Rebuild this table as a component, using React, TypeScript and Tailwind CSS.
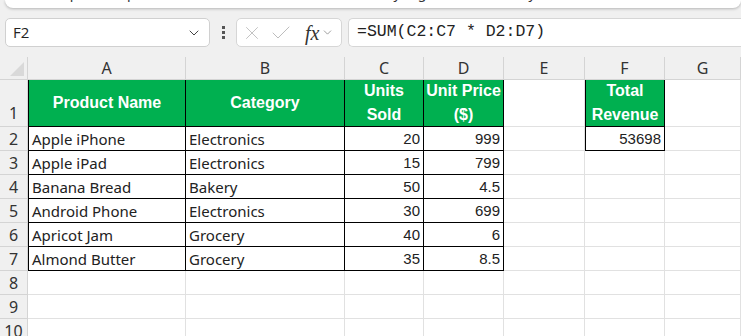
import { ChevronDown, X, Check } from "lucide-react";

const cols = ["A", "B", "C", "D", "E", "F", "G"];

const rows = [
  ["Apple iPhone", "Electronics", "20", "999"],
  ["Apple iPad", "Electronics", "15", "799"],
  ["Banana Bread", "Bakery", "50", "4.5"],
  ["Android Phone", "Electronics", "30", "699"],
  ["Apricot Jam", "Grocery", "40", "6"],
  ["Almond Butter", "Grocery", "35", "8.5"],
];

const cell = "border-r border-b border-[#e1e1e1] box-border";
const tbl = "border-r border-b border-black box-border";
const num = "font-['Liberation_Sans',sans-serif] text-right pr-[3px]";
const head =
  "bg-[#00b050] text-white font-bold font-['Liberation_Sans',sans-serif] text-[16px] flex items-center justify-center text-center leading-[24px] whitespace-nowrap";

export default function App() {
  return (
    <div className="w-[741px] h-[336px] overflow-hidden bg-[#f0f0f0] font-['Noto_Sans',sans-serif] text-[#222]">
      {/* bottom edge of the panel above */}
      <div className="ml-[5px] h-[8px] bg-white rounded-b-xl shadow-[0_1px_3px_rgba(0,0,0,0.25)] overflow-hidden">
        <div className="-mt-[16px] pl-[40px] text-[14px] leading-[18px] whitespace-nowrap text-[#333]">
          Output: sample_values, formula_results, and the array argument summary
        </div>
      </div>

      {/* formula bar */}
      <div className="flex items-center mt-[10px] h-[29px]">
        <div className="ml-[5px] w-[205px] h-full bg-white border border-[#d0d0d0] rounded-[5px] flex items-center justify-between pl-[7px] pr-[7px]">
          <span className="text-[15px] font-['Open_Sans',sans-serif] text-[#222]">F2</span>
          <ChevronDown size={16} strokeWidth={1.5} className="text-[#444]" />
        </div>
        <div className="w-[26px] flex flex-col items-center gap-[2px]">
          <span className="w-[3px] h-[3px] bg-[#555]" />
          <span className="w-[3px] h-[3px] bg-[#555]" />
          <span className="w-[3px] h-[3px] bg-[#555]" />
        </div>
        <div className="w-[106px] h-full bg-white border border-[#d6d6d6] rounded-[5px] flex items-center pl-[4px] gap-[6px]">
          <X size={22} strokeWidth={1} className="text-[#bdbdbd]" />
          <Check size={24} strokeWidth={1} className="text-[#bdbdbd]" />
          <div className="flex items-center ml-[6px]">
            <span className="font-['Liberation_Serif',serif] italic text-[20px] text-[#333] leading-none">fx</span>
            <ChevronDown size={13} strokeWidth={1.3} className="text-[#777] ml-[2px]" />
          </div>
        </div>
        <div className="ml-[6px] flex-1 h-full bg-white border border-[#d6d6d6] border-r-0 rounded-l-[5px] flex items-center pl-[8px]">
          <span className="font-['Liberation_Mono',monospace] text-[16.5px] text-[#222]">=SUM(C2:C7 * D2:D7)</span>
        </div>
      </div>

      {/* sheet */}
      <div className="mt-[10px] grid grid-cols-[28px_158px_159px_79px_80px_81px_80px_76px] grid-rows-[23px_47px_repeat(9,24px)] bg-white text-[15px]">
        {/* corner */}
        <div className="relative bg-[#f0f0f0] border-r border-b border-[#d4d4d4] box-border overflow-hidden">
          <div className="absolute right-[3px] bottom-[3px] w-0 h-0 border-l-[14px] border-l-transparent border-b-[14px] border-b-[#d9d9d9]" />
        </div>
        {cols.map((c) => (
          <div
            key={c}
            className="bg-[#f0f0f0] border-r border-b border-[#d4d4d4] box-border flex items-center justify-center text-[#333] text-[16px]"
          >
            {c}
          </div>
        ))}

        {/* row 1 */}
        <div className="bg-[#f0f0f0] border-r border-b border-[#d4d4d4] box-border flex items-end justify-center text-[#333] text-[16px] pb-[1px]">
          1
        </div>
        <div className={`${tbl} border-l ${head}`}>Product Name</div>
        <div className={`${tbl} ${head}`}>Category</div>
        <div className={`${tbl} ${head}`}>
          <span>Units<br />Sold</span>
        </div>
        <div className={`${tbl} ${head}`}>
          <span>Unit Price<br />($)</span>
        </div>
        <div className={cell} />
        <div className={`${tbl} border-l ${head}`}>
          <span>Total<br />Revenue</span>
        </div>
        <div className={cell} />

        {/* rows 2-7 */}
        {rows.map((r, ri) => (
          <Row key={ri} n={ri + 2} r={r} />
        ))}

        {/* rows 8-10 */}
        {[8, 9, 10].map((n) => (
          <Empty key={n} n={n} />
        ))}
      </div>
    </div>
  );
}

function RowHead({ n }: { n: number }) {
  return (
    <div className="bg-[#f0f0f0] border-r border-b border-[#d4d4d4] box-border flex items-center justify-center text-[#333] text-[16px]">
      {n}
    </div>
  );
}

function Row({ n, r }: { n: number; r: string[] }) {
  return (
    <>
      <RowHead n={n} />
      <div className={`${tbl} border-l flex items-end pl-[3px] leading-[22px]`}>{r[0]}</div>
      <div className={`${tbl} flex items-end pl-[3px] leading-[22px]`}>{r[1]}</div>
      <div className={`${tbl} ${num} flex items-end justify-end leading-[22px]`}>{r[2]}</div>
      <div className={`${tbl} ${num} flex items-end justify-end leading-[22px]`}>{r[3]}</div>
      <div className={cell} />
      {n === 2 ? (
        <div className={`${tbl} border-l ${num} flex items-end justify-end leading-[22px]`}>53698</div>
      ) : (
        <div className={cell} />
      )}
      <div className={cell} />
    </>
  );
}

function Empty({ n }: { n: number }) {
  return (
    <>
      <RowHead n={n} />
      {cols.map((c) => (
        <div key={c} className={cell} />
      ))}
    </>
  );
}
